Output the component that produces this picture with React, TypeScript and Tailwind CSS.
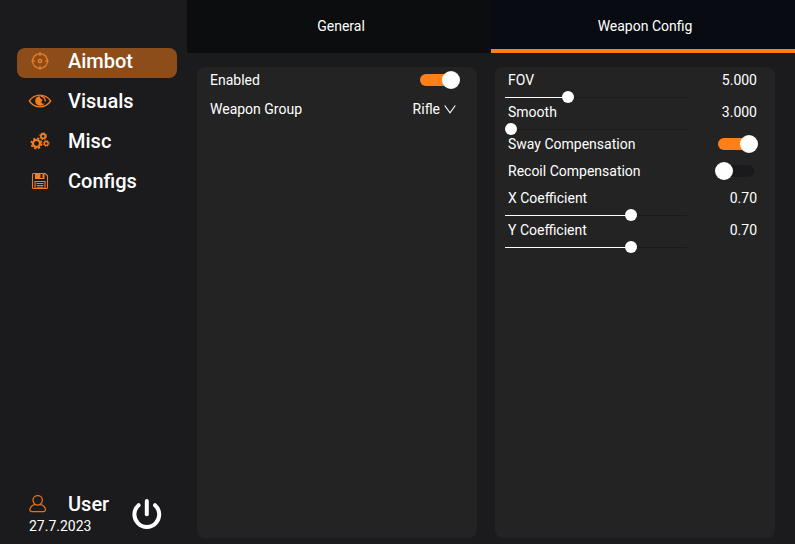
import React, { useState } from 'react'

type SliderProps = {
    label: string;
    value: number;
    min: number;
    max: number;
    digits: number;
    onChange: (value: number) => void;
}

type ToggleProps = {
    label: string;
    checked: boolean;
    onChange: (checked: boolean) => void;
}

const CrosshairIcon = () => (
    <svg width="20" height="20" viewBox="0 0 20 20" fill="none" stroke="currentColor" strokeWidth="1.2">
        <circle cx="10" cy="10" r="7.4" />
        <circle cx="10" cy="10" r="1.6" strokeWidth="1.4" />
        <path d="M10 1v4M10 15v4M1 10h4M15 10h4" />
    </svg>
)

const EyeIcon = () => (
    <svg width="24" height="16" viewBox="0 0 24 16" fill="none" stroke="currentColor" strokeWidth="1.3">
        <path d="M1.3 8C4 4.2 7.6 2.2 12 2.2S20 4.2 22.7 8C20 11.8 16.4 13.8 12 13.8S4 11.8 1.3 8Z" />
        <path d="M11.5 3C12 5.200 13.300 6.500 15.200 7.200C13.600 7.500 12.900 8.600 13.600 9.700C14.200 10.700 15.500 11 16.800 10.300A5.200 5.200 0 0 1 7.200 8.300A5.300 5.300 0 0 1 11.500 3Z" fill="currentColor" stroke="none" />
        <path d="M12.500 3A5 5 0 0 1 17.200 8.500" />
    </svg>
)

const GearsIcon = () => (
    <svg width="20" height="18" viewBox="0 0 20 18" fill="none" stroke="currentColor">
        <circle cx="6.500" cy="11.500" r="3.500" strokeWidth="2.200" />
        <circle cx="6.500" cy="11.500" r="5.100" strokeWidth="1.800" strokeDasharray="2.200 1.805" />
        <circle cx="13.200" cy="4.200" r="2.200" strokeWidth="1.800" />
        <circle cx="13.200" cy="4.200" r="3.300" strokeWidth="1.100" strokeDasharray="1.400 1.192" />
        <circle cx="16.200" cy="11.400" r="1.900" strokeWidth="1.300" />
        <circle cx="16.200" cy="11.400" r="2.900" strokeWidth="1" strokeDasharray="1.200 1.078" />
    </svg>
)

const FloppyIcon = () => (
    <svg width="18" height="18" viewBox="0 0 18 18" fill="none" stroke="currentColor" strokeWidth="1.100">
        <path d="M1.500 2.500a1 1 0 0 1 1-1h11.700l2.300 2.300v11.700a1 1 0 0 1-1 1h-13a1 1 0 0 1-1-1Z" />
        <path d="M4.500 1.500v5h8.500v-5M4 16.500v-7h10v7M5.500 11.500h7M5.500 13.500h7M5.500 15.200h7" />
        <path d="M5 2h4.500v4H5ZM11.500 2H13v4h-1.500Z" fill="currentColor" stroke="none" />
    </svg>
)

const UserIcon = () => (
    <svg width="18" height="18" viewBox="0 0 18 18" fill="none" stroke="currentColor" strokeWidth="1.300">
        <path d="M6.200 9.300C4.700 8.200 4 6.900 4 5.300a4.700 4.700 0 0 1 9.400 0c0 1.600-.7 2.900-2.200 4 3.200.8 5.100 2.700 5.300 5.500 0 1-.7 1.800-1.800 1.800h-12C1.600 16.600.900 15.800.900 14.800c.2-2.800 2.100-4.700 5.300-5.500 1.500.9 3.500.9 5 0" />
    </svg>
)

const PowerIcon = () => (
    <svg width="30" height="32" viewBox="0 0 30 32" fill="none" stroke="currentColor" strokeWidth="4" strokeLinecap="round">
        <path d="M14.800 3v13.300" />
        <path d="M6.600 7.200a12.400 12.400 0 1 0 16.400 0" />
    </svg>
)

const menu = [
    { name: 'Aimbot', icon: <CrosshairIcon /> },
    { name: 'Visuals', icon: <EyeIcon /> },
    { name: 'Misc', icon: <GearsIcon /> },
    { name: 'Configs', icon: <FloppyIcon /> },
]

const tabs = [
    { name: 'General', bg: 'bg-[#0c0d0e]' },
    { name: 'Weapon Config', bg: 'bg-[#090b12]' },
]

function Slider({ label, value, min, max, digits, onChange }: SliderProps) {
    const percent = ((value - min) / (max - min)) * 100;
    return (
        <label className="block">
            <span className="flex h-4 items-center justify-between pl-[13px] pr-[18px]">
                <span>{label}</span>
                <span>{value.toFixed(digits)}</span>
            </span>
            <input
                type="range"
                min={min}
                max={max}
                step="0.001"
                value={value}
                onChange={(e) => onChange(Number(e.target.value))}
                className="ml-2.5 mt-[2px] block h-3.5 w-[65%] cursor-pointer appearance-none bg-transparent bg-[linear-gradient(white,white),linear-gradient(#1a1a1b,#1a1a1b)] bg-left bg-no-repeat [&::-webkit-slider-thumb]:size-3 [&::-webkit-slider-thumb]:appearance-none [&::-webkit-slider-thumb]:rounded-full [&::-webkit-slider-thumb]:bg-white"
                style={{ backgroundSize: `${percent}% 1px, 100% 1px` }}
            />
        </label>
    )
}

function Toggle({ label, checked, onChange }: ToggleProps) {
    return (
        <label className="flex h-4 cursor-pointer items-center justify-between pl-[13px] pr-[21px]">
            <span>{label}</span>
            <input
                type="checkbox"
                role="switch"
                checked={checked}
                onChange={(e) => onChange(e.target.checked)}
                className="flex h-3 w-9 cursor-pointer appearance-none items-center rounded-full bg-[#1a1a1c] before:size-[18px] before:shrink-0 before:-translate-x-[3px] before:rounded-full before:bg-white checked:bg-[#ff8019] checked:before:translate-x-[22px]"
            />
        </label>
    )
}

export default function App () {
    const [activeMenu, setActiveMenu] = useState('Aimbot');
    const [activeTab, setActiveTab] = useState('Weapon Config');
    const [enabled, setEnabled] = useState(true);
    const [group, setGroup] = useState('Rifle');
    const [fov, setFov] = useState(5);
    const [smooth, setSmooth] = useState(3);
    const [sway, setSway] = useState(true);
    const [recoil, setRecoil] = useState(false);
    const [xCoef, setXCoef] = useState(0.704);
    const [yCoef, setYCoef] = useState(0.704);

    return (
        <div className="flex min-h-screen bg-[#1b1a1c] font-[Roboto,sans-serif] text-sm text-white">
            {/* Sidebar */}
            <aside className="flex w-[187px] shrink-0 flex-col justify-between pt-12 pb-2">
                <nav className="flex flex-col gap-2.5 pl-[17px] pr-2.5">
                    {menu.map((item) => (
                        <button
                            key={item.name}
                            onClick={() => setActiveMenu(item.name)}
                            className={`flex h-[30px] items-center gap-4 rounded-lg pb-1 pl-[11px] text-xl leading-6 font-medium ${activeMenu === item.name ? 'bg-[#8d4d1a]' : ''}`}
                        >
                            <span className="flex w-6 shrink-0 justify-center text-[#f47d20]">{item.icon}</span>
                            {item.name}
                        </button>
                    ))}
                </nav>
                <div className="flex items-center justify-between pl-[29px] pr-[25px]">
                    <div>
                        <div className="flex items-center gap-[21px]">
                            <span className="text-[#e07318]"><UserIcon /></span>
                            <span className="text-xl leading-6 font-medium">User</span>
                        </div>
                        <p className="leading-5">27.7.2023</p>
                    </div>
                    <button aria-label="Power"><PowerIcon /></button>
                </div>
            </aside>

            <main className="flex min-w-0 flex-1 flex-col">
                {/* Tabs */}
                <div className="flex h-[53px]" role="tablist">
                    {tabs.map((tab) => (
                        <button
                            key={tab.name}
                            role="tab"
                            aria-selected={activeTab === tab.name}
                            onClick={() => setActiveTab(tab.name)}
                            className={`flex-1 border-b-4 pt-0.5 pl-1 ${tab.bg} ${activeTab === tab.name ? 'border-[#ff8019]' : 'border-transparent'}`}
                        >
                            {tab.name}
                        </button>
                    ))}
                </div>

                {/* Panels */}
                <div className="grid flex-1 grid-cols-2 gap-[18px] pt-3.5 pr-5 pb-1.5 pl-2.5">
                    <section className="flex flex-col gap-[13px] rounded-lg bg-[#232323] pt-[5px]">
                        <Toggle label="Enabled" checked={enabled} onChange={setEnabled} />
                        <div className="flex h-4 items-center justify-between pl-[13px] pr-[21px]">
                            <label htmlFor="group">Weapon Group</label>
                            <div className="relative flex items-center">
                                <select
                                    id="group"
                                    value={group}
                                    onChange={(e) => setGroup(e.target.value)}
                                    className="cursor-pointer appearance-none bg-transparent pr-4 [field-sizing:content]"
                                >
                                    <option>Rifle</option>
                                </select>
                                <svg className="pointer-events-none absolute right-0" width="12" height="10" viewBox="0 0 12 10" fill="none" stroke="currentColor" strokeWidth="1.100">
                                    <path d="M0.700 1.500L6 8.800L11.300 1.500" />
                                </svg>
                            </div>
                        </div>
                    </section>

                    <section className="rounded-lg bg-[#232323] pt-[5px]">
                        <Slider label="FOV" value={fov} min={0} max={15} digits={3} onChange={setFov} />
                        <Slider label="Smooth" value={smooth} min={3} max={20} digits={3} onChange={setSmooth} />
                        <div className="mb-[11px] flex flex-col gap-[11px]">
                            <Toggle label="Sway Compensation" checked={sway} onChange={setSway} />
                            <Toggle label="Recoil Compensation" checked={recoil} onChange={setRecoil} />
                        </div>
                        <Slider label="X Coefficient" value={xCoef} min={0} max={1} digits={2} onChange={setXCoef} />
                        <Slider label="Y Coefficient" value={yCoef} min={0} max={1} digits={2} onChange={setYCoef} />
                    </section>
                </div>
            </main>
        </div>
    )
}
